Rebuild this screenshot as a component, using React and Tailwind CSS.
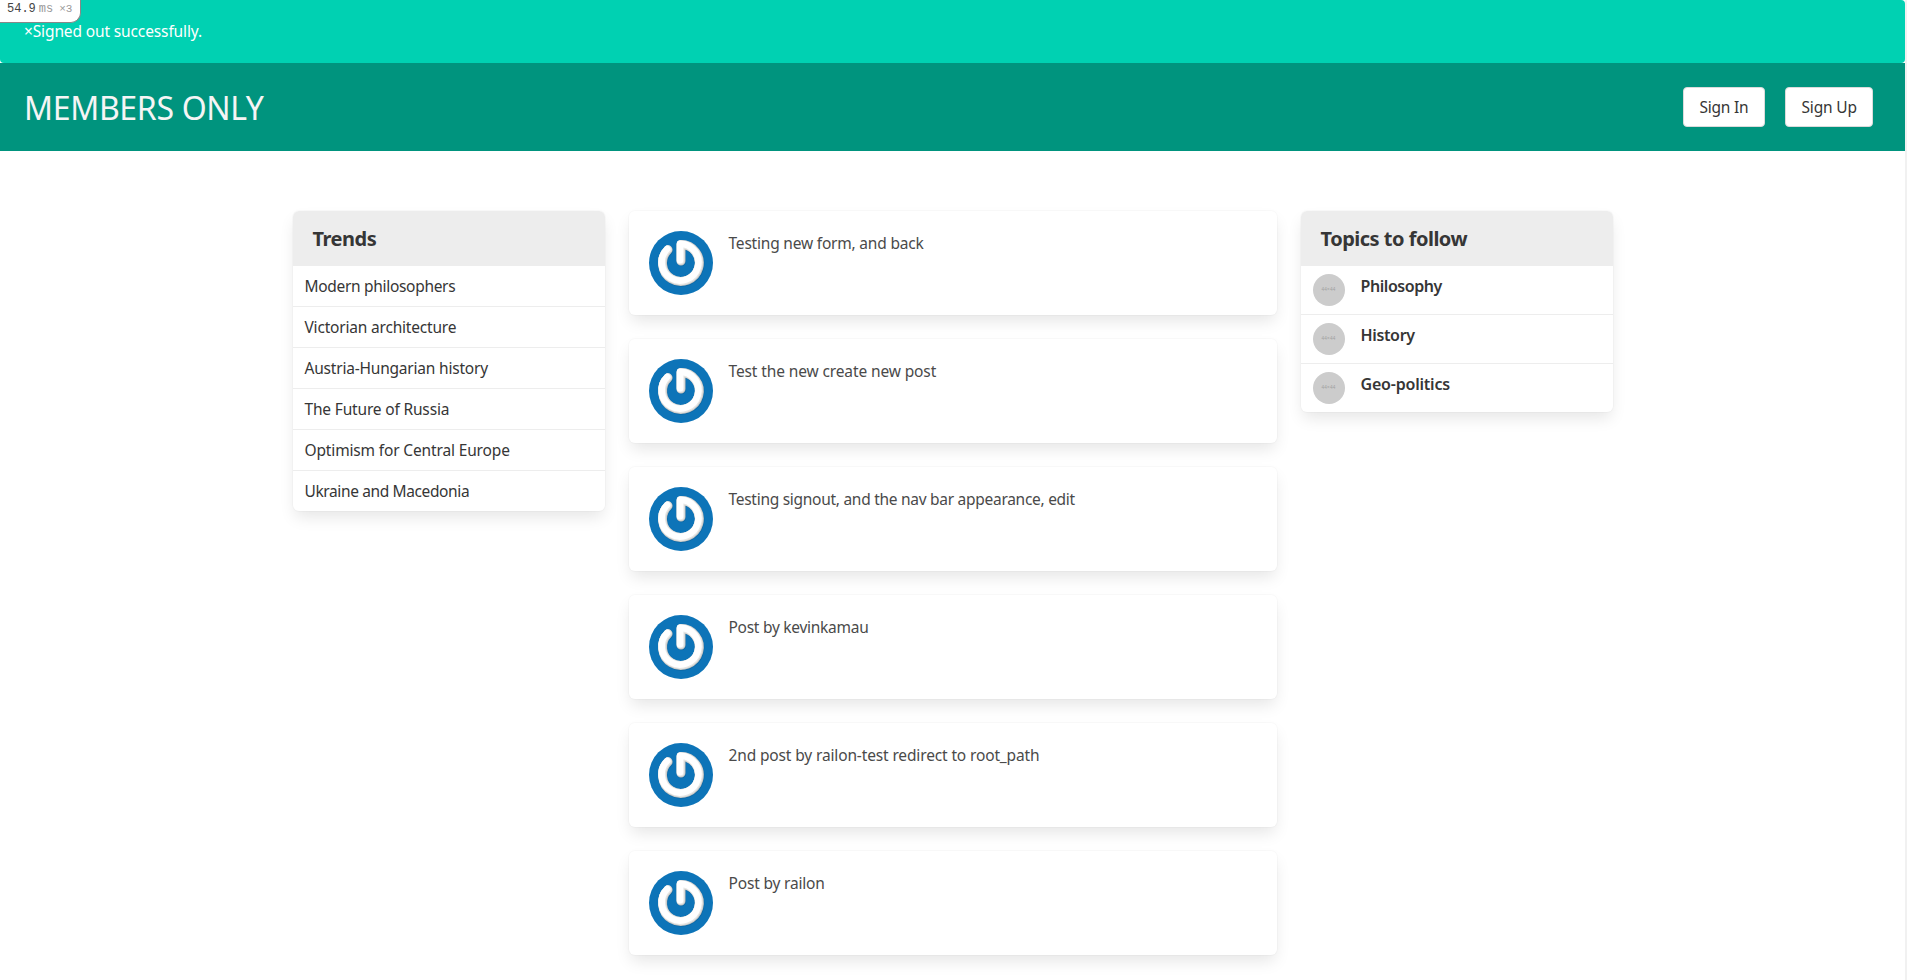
const trends = [
  { label: "Modern philosophers", tracking: "tracking-[-0.31px]" },
  { label: "Victorian architecture", tracking: "tracking-[-0.19px]" },
  { label: "Austria-Hungarian history", tracking: "tracking-[-0.2px]" },
  { label: "The Future of Russia", tracking: "tracking-[-0.17px]" },
  { label: "Optimism for Central Europe", tracking: "tracking-[-0.15px]" },
  { label: "Ukraine and Macedonia", tracking: "tracking-[-0.38px]" },
];

const topics = [
  { label: "Philosophy", tracking: "tracking-[-0.43px]" },
  { label: "History", tracking: "tracking-[-0.35px]" },
  { label: "Geo-politics", tracking: "tracking-[-0.2px]" },
];

const posts = [
  { text: "Testing new form, and back", tracking: "tracking-[-0.2px]" },
  { text: "Test the new create new post", tracking: "tracking-[-0.12px]" },
  { text: "Testing signout, and the nav bar appearance, edit", tracking: "tracking-[-0.28px]" },
  { text: "Post by kevinkamau", tracking: "tracking-[-0.27px]" },
  { text: "2nd post by railon-test redirect to root_path", tracking: "tracking-[-0.14px]" },
  { text: "Post by railon", tracking: "tracking-[-0.18px]" },
];

const cardShadow =
  "shadow-[0_8px_16px_-2px_rgba(10,10,10,0.1),0_0_0_1px_rgba(10,10,10,0.02)]";

function Avatar() {
  const d = "M-12.9 -13.2 A18.4 18.4 0 1 0 0 -18.4 L0 -2";
  return (
    <svg viewBox="-32 -32 64 64" className="size-16 shrink-0" aria-hidden="true">
      <circle r="32" fill="#0d74b8" />
      <g fill="none" strokeWidth="9" strokeLinecap="round" strokeLinejoin="round">
        <path d={d} stroke="#0a4f80" strokeOpacity="0.35" transform="translate(0.5 0.7)" />
        <path d={d} stroke="#c8c8c6" />
        <path d={d} stroke="#e6e6e4" strokeWidth="8" transform="translate(-0.4 -0.4)" />
        <path d={d} stroke="#ffffff" strokeWidth="6.6" transform="translate(-0.9 -0.8)" />
      </g>
    </svg>
  );
}

function Panel({ title, tracking, children }) {
  return (
    <section className={`w-[312px] rounded-md bg-white text-[#363636] ${cardShadow}`}>
      <h2
        className={`rounded-t-md bg-[#ededed] px-5 pt-[17px] pb-[15px] text-xl leading-[22.5px] font-bold ${tracking}`}
      >
        {title}
      </h2>
      <ul className="divide-y divide-[#ededed]">{children}</ul>
    </section>
  );
}

function NavButton({ className, children }) {
  return (
    <button
      className={`h-10 rounded border border-[#dbdbdb] bg-white pl-[15.5px] text-left whitespace-nowrap text-[#363636] ${className}`}
    >
      {children}
    </button>
  );
}

export default function App() {
  return (
    <div className="flex h-[980px] overflow-hidden bg-white font-['Noto_Sans','Open_Sans',sans-serif] text-[15.5px] leading-6 text-[#4a4a4a]">
      <div className="min-w-0 flex-1">
        <div className="relative h-[63px] rounded bg-[#00d1b2] pt-[19px] pl-6 tracking-[-0.13px] text-white">
          ×Signed out successfully.
          <div className="absolute top-0 left-0 flex h-[22.5px] w-[80.5px] items-baseline rounded-br-[10px] border-r border-b border-[#888] bg-white pl-[7px] font-['Liberation_Mono',monospace] text-xs leading-[19px] tracking-normal text-[#444]">
            <span>54.9</span>
            <span className="ml-[3px] text-[#999]">ms</span>
            <span className="ml-[6px] text-[11px] text-[#999]">×3</span>
          </div>
        </div>

        <nav className="flex h-[88px] items-center bg-[#00947e] pr-8 pl-6">
          <h1 className="pt-0.5 text-[32px] leading-9 tracking-[-0.32px] text-[#f5f5f5]">
            MEMBERS ONLY
          </h1>
          <div className="ml-auto flex gap-5">
            <NavButton className="w-[82px] tracking-[-0.23px]">Sign In</NavButton>
            <NavButton className="w-[88px] tracking-[-0.17px]">Sign Up</NavButton>
          </div>
        </nav>

        <main className="mx-auto flex w-[1320px] items-start gap-6 pt-[60px]">
          <Panel title="Trends" tracking="tracking-[-0.5px]">
            {trends.map((t) => (
              <li key={t.label} className={`px-3 py-2 ${t.tracking}`}>
                {t.label}
              </li>
            ))}
          </Panel>

          <div className="flex w-[648px] flex-col gap-6">
            {posts.map((p) => (
              <article
                key={p.text}
                className={`flex h-[104px] gap-4 rounded-md bg-white p-5 ${cardShadow}`}
              >
                <Avatar />
                <p className={p.tracking}>{p.text}</p>
              </article>
            ))}
          </div>

          <Panel title="Topics to follow" tracking="tracking-[-0.5px]">
            {topics.map((t) => (
              <li key={t.label} className="flex gap-4 px-3 py-2">
                <span className="flex size-8 items-center justify-center rounded-full bg-[#ccc] text-[4.5px] leading-none tracking-[0.2px] text-[#a0a0a0]">
                  44×44
                </span>
                <span className={`text-base font-semibold ${t.tracking}`}>{t.label}</span>
              </li>
            ))}
          </Panel>
        </main>
      </div>
      <div className="w-0.5 shrink-0 bg-[#f1f1f1]" />
    </div>
  );
}
